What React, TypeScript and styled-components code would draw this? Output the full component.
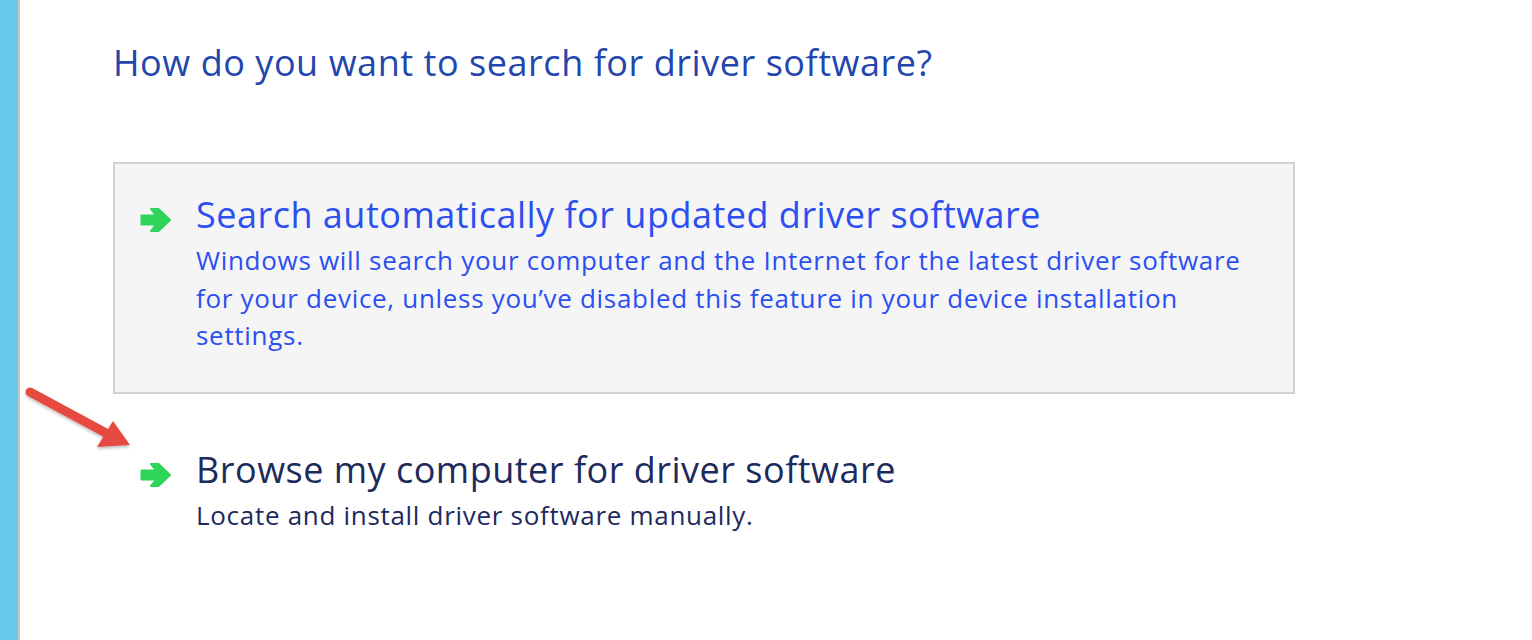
import React from "react";
import styled, { createGlobalStyle } from "styled-components";

const Global = createGlobalStyle`
  html, body { margin: 0; padding: 0; background: #ffffff; }
  body { font-family: "Open Sans", "Noto Sans", sans-serif; }
`;

const Page = styled.div`
  display: flex;
  width: 1532px;
  height: 640px;
  overflow: hidden;
  position: relative;
  background: #ffffff;
`;

const Stripe = styled.div`
  width: 18px;
  flex: none;
  background: #66c9ea;
  border-right: 2px solid #c9c9c4;
`;

const Main = styled.div`
  flex: 1;
  display: flex;
  flex-direction: column;
  padding: 39px 0 0 93px;
`;

const Heading = styled.h1`
  margin: 0;
  font-weight: 400;
  font-size: 36px;
  letter-spacing: 0.55px;
  line-height: 48px;
  color: #2346ad;
`;

const Option = styled.div<{ $boxed?: boolean }>`
  display: flex;
  align-items: flex-start;
  gap: 24px;
  width: 1182px;
  box-sizing: border-box;
  padding: ${(p) => (p.$boxed ? "29px 18px 37px 25px" : "52px 18px 30px 25px")};
  margin-top: ${(p) => (p.$boxed ? "75px" : "0")};
  background: ${(p) => (p.$boxed ? "#f5f5f5" : "transparent")};
  border: 2px solid ${(p) => (p.$boxed ? "#d2d2d2" : "transparent")};
`;

const Icon = styled.svg`
  flex: none;
  width: 32px;
  height: 26px;
  margin-top: 14px;
`;

const Texts = styled.div`
  display: flex;
  flex-direction: column;
`;

const Title = styled.div<{ $blue?: boolean }>`
  font-size: 36px;
  letter-spacing: 0.5px;
  line-height: 44px;
  color: ${(p) => (p.$blue ? "#2b4ff0" : "#1d2a5c")};
`;

const Desc = styled.div<{ $blue?: boolean }>`
  margin-top: ${(p) => (p.$blue ? "5px" : "5px")};
  font-size: 26px;
  letter-spacing: 0.7px;
  line-height: 37.5px;
  color: ${(p) => (p.$blue ? "#2b4ff0" : "#1d2a5c")};
  max-width: 1075px;
`;

const RedArrow = styled.svg`
  position: absolute;
  left: 20px;
  top: 381px;
  width: 120px;
  height: 76px;
`;

const GreenArrow = () => (
  <Icon viewBox="0 0 32 26">
    <polygon
      points="1.5,8.5 16.5,8.5 11,2 18.5,2 30,13 18.5,24 11,24 16.5,17.5 1.5,17.5"
      fill="#2fd45b"
      stroke="#2fd45b"
      strokeWidth="2"
      strokeLinejoin="round"
    />
  </Icon>
);

export default function App() {
  return (
    <>
      <Global />
      <Page>
        <Stripe />
        <Main>
          <Heading>How do you want to search for driver software?</Heading>
          <Option $boxed>
            <GreenArrow />
            <Texts>
              <Title $blue>Search automatically for updated driver software</Title>
              <Desc $blue>
                Windows will search your computer and the Internet for the latest driver software
                for your device, unless you’ve disabled this feature in your device installation
                settings.
              </Desc>
            </Texts>
          </Option>
          <Option>
            <GreenArrow />
            <Texts>
              <Title>Browse my computer for driver software</Title>
              <Desc>Locate and install driver software manually.</Desc>
            </Texts>
          </Option>
        </Main>
        <RedArrow viewBox="0 0 120 76">
          <defs>
            <filter id="sh" x="-20%" y="-20%" width="140%" height="160%">
              <feDropShadow dx="0" dy="2" stdDeviation="1.5" floodColor="#000" floodOpacity="0.25" />
            </filter>
          </defs>
          <g filter="url(#sh)">
            <line x1="10" y1="11" x2="86" y2="52" stroke="#e5493f" strokeWidth="9" strokeLinecap="round" />
            <polygon points="110,64 77,66 93,40" fill="#e5493f" />
          </g>
        </RedArrow>
      </Page>
    </>
  );
}
